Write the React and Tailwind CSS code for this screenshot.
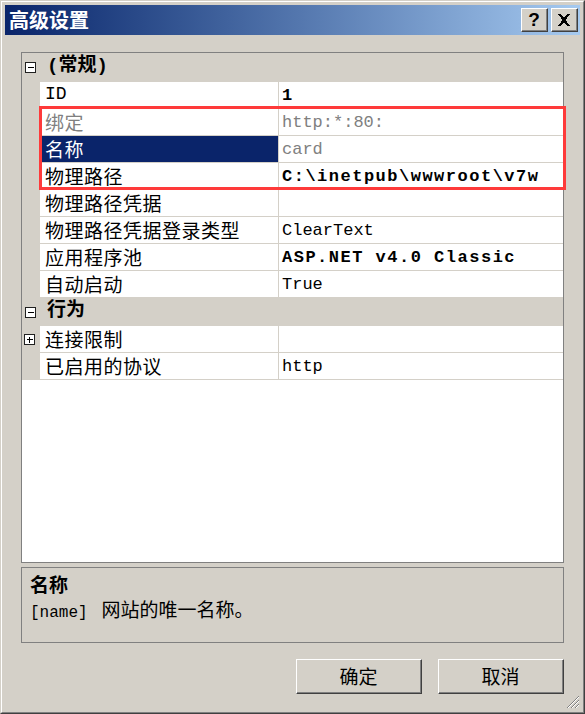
import React from 'react'

const mono = "font-['Liberation_Mono','Noto_Sans_CJK_SC',monospace]"
const cjk = "font-['Noto_Sans_CJK_SC','Liberation_Sans',sans-serif]"

function Expander({ plus }) {
  return (
    <svg width="11" height="11" viewBox="0 0 11 11" shapeRendering="crispEdges">
      <rect x="0.5" y="0.5" width="10" height="10" fill="#ffffff" stroke="#202020" />
      <line x1="2.5" y1="5.5" x2="8.5" y2="5.5" stroke="#000000" />
      {plus && <line x1="5.5" y1="2.5" x2="5.5" y2="8.5" stroke="#000000" />}
    </svg>
  )
}

function Category({ label, h }) {
  return (
    <div className={`flex items-center bg-[#d4d0c8] ${h}`}>
      <div className="w-[25px] pl-[3px] flex items-center">
        <Expander />
      </div>
      <span className={`${mono} text-[19px] font-bold leading-none text-black pb-[2px]`}>{label}</span>
    </div>
  )
}

function Row({ label, value, labelGray, selected, bold, valueGray, expander }) {
  let labelCls = 'text-black'
  if (selected) labelCls = 'bg-[#0a246a] text-white'
  else if (labelGray) labelCls = 'text-[#808080]'

  return (
    <div className="flex h-[27px] border-b border-[#d4d0c8]">
      <div className="w-[18px] bg-[#d4d0c8] flex items-center pl-[2px]">
        {expander && <Expander plus />}
      </div>
      <div
        className={`w-[238px] flex items-center pl-[5px] pb-[2px] ${cjk} text-[19px] tracking-[0.5px] leading-none ${labelCls}`}
      >
        {label === 'ID' ? <span className={`${mono} text-[18px] tracking-normal`}>ID</span> : label}
      </div>
      <div className="w-px bg-[#d4d0c8]" />
      <div
        className={`flex-1 flex items-center pl-[3px] ${mono} text-[17px] leading-none whitespace-nowrap overflow-hidden ${
          bold ? 'font-bold tracking-[1.5px]' : ''
        } ${valueGray ? 'text-[#808080]' : 'text-black'}`}
      >
        {value}
      </div>
    </div>
  )
}

function Raised({ className, children }) {
  return (
    <div className={`border-t border-l border-white border-r border-b border-r-[#404040] border-b-[#404040] bg-[#d4d0c8] ${className}`}>
      <div className="w-full h-full border-r border-b border-[#808080] flex items-center justify-center">
        {children}
      </div>
    </div>
  )
}

export default function App() {
  return (
    <div className="w-[585px] h-[714px] bg-[#d4d0c8] border-t border-l border-[#d4d0c8] border-r border-b border-r-[#404040] border-b-[#404040]">
      <div className="h-full border-t border-l border-white border-r border-b border-r-[#808080] border-b-[#808080] p-[3px] flex flex-col">
        {/* title bar */}
        <div className="h-[30px] shrink-0 flex items-center bg-gradient-to-r from-[#0a246a] to-[#a6caf0] pl-[4px] pr-[2px]">
          <span className={`${cjk} text-[20px] font-bold text-white leading-none flex-1 pb-[1px]`}>高级设置</span>
          <Raised className="w-[27px] h-[24px]">
            <span className="font-['Liberation_Sans',sans-serif] text-[19px] font-bold leading-none text-black">?</span>
          </Raised>
          <Raised className="w-[27px] h-[24px] ml-[3px]">
            <svg width="14" height="12" viewBox="0 0 14 12" shapeRendering="crispEdges">
              <path d="M1 0h3l3 4 3-4h3l-4.5 6 4.5 6h-3l-3-4-3 4h-3l4.5-6z" fill="#000" />
            </svg>
          </Raised>
        </div>

        <div className="pt-[17px] px-[16px] flex flex-col">
          {/* property grid */}
          <div className="relative h-[511px] border border-[#808080] bg-white">
            <Category label="(常规)" h="h-[29px]" />
            <Row label="ID" value="1" bold />
            <Row label="绑定" value="http:*:80:" labelGray valueGray />
            <Row label="名称" value="card" selected valueGray />
            <Row label="物理路径" value="C:\inetpub\wwwroot\v7w" bold />
            <Row label="物理路径凭据" value="" />
            <Row label="物理路径凭据登录类型" value="ClearText" />
            <Row label="应用程序池" value="ASP.NET v4.0 Classic" bold />
            <Row label="自动启动" value="True" />
            <Category label="行为" h="h-[28px]" />
            <Row label="连接限制" value="" expander />
            <Row label="已启用的协议" value="http" />

            {/* annotation */}
            <div className="absolute left-[17px] top-[53px] w-[527px] h-[84px] border-[3px] border-[#fe3a3a] pointer-events-none" />
          </div>

          {/* description */}
          <div className="mt-[4px] h-[76px] border border-[#808080] pl-[8px] pt-[4px]">
            <div className={`${cjk} text-[19px] font-bold leading-[24px] text-black`}>名称</div>
            <div className={`${cjk} text-[19px] leading-[26px] text-black flex items-baseline`}>
              <span className={`${mono} text-[16px] mr-[14px]`}>[name]</span>
              <span>网站的唯一名称。</span>
            </div>
          </div>

          {/* buttons */}
          <div className="mt-[16px] flex justify-end gap-[16px]">
            <Raised className="w-[126px] h-[35px]">
              <span className={`${cjk} text-[19px] leading-none text-black pb-[1px]`}>确定</span>
            </Raised>
            <Raised className="w-[126px] h-[35px]">
              <span className={`${cjk} text-[19px] leading-none text-black pb-[1px]`}>取消</span>
            </Raised>
          </div>
        </div>

        <div className="flex-1 flex items-end justify-end">
          <svg width="14" height="14" viewBox="0 0 14 14" shapeRendering="crispEdges">
            <path d="M13 1L1 13M13 5L5 13M13 9L9 13" stroke="#808080" strokeWidth="1.2" />
            <path d="M13 2L2 13M13 6L6 13M13 10L10 13" stroke="#ffffff" strokeWidth="1" />
          </svg>
        </div>
      </div>
    </div>
  )
}
